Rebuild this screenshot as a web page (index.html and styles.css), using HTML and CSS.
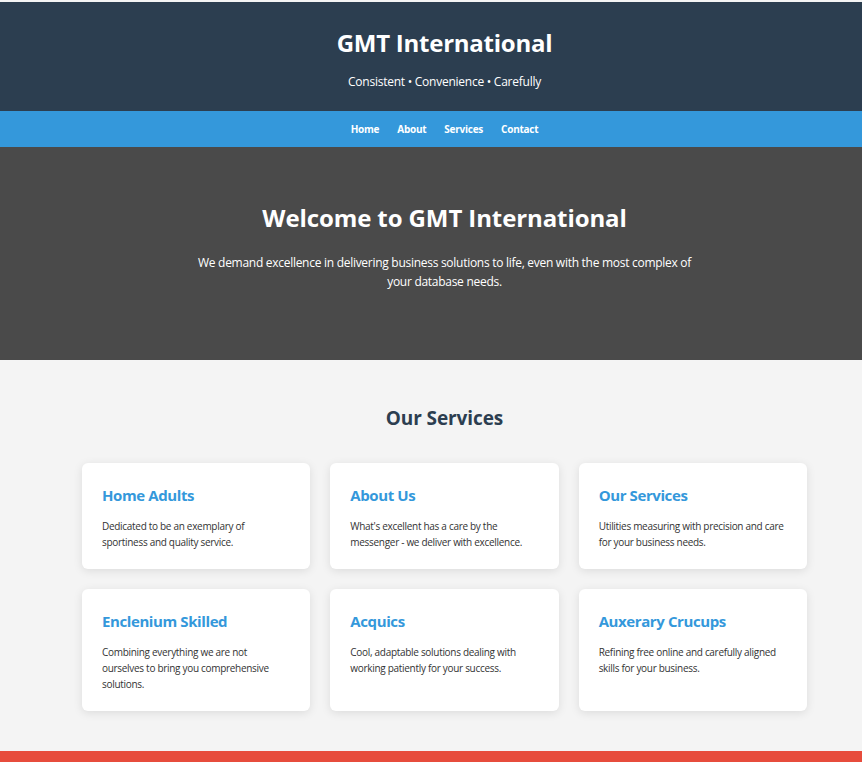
FILE: index.html
```html
<!DOCTYPE html>
<html lang="en">
<head>
<meta charset="utf-8">
<title>GMT International</title>
<link rel="stylesheet" href="styles.css">
</head>
<body>
<div class="page">
  <header class="site-header">
    <h1 class="brand">GMT International</h1>
    <p class="tagline">Consistent • Convenience • Carefully</p>
  </header>
  <nav class="main-nav">
    <a href="#">Home</a>
    <a href="#">About</a>
    <a href="#">Services</a>
    <a href="#">Contact</a>
  </nav>
  <section class="hero">
    <h2 class="hero-title">Welcome to GMT International</h2>
    <p class="hero-text">We demand excellence in delivering business solutions to life, even with the most complex of your database needs.</p>
  </section>
  <section class="services">
    <h2 class="section-title">Our Services</h2>
    <div class="grid">
      <div class="card"><h3>Home Adults</h3><p>Dedicated to be an exemplary of sportiness and quality service.</p></div>
      <div class="card"><h3>About Us</h3><p>What's excellent has a care by the messenger - we deliver with excellence.</p></div>
      <div class="card"><h3>Our Services</h3><p>Utilities measuring with precision and care for your business needs.</p></div>
      <div class="card"><h3>Enclenium Skilled</h3><p>Combining everything we are not ourselves to bring you comprehensive solutions.</p></div>
      <div class="card"><h3>Acquics</h3><p>Cool, adaptable solutions dealing with working patiently for your success.</p></div>
      <div class="card"><h3>Auxerary Crucups</h3><p>Refining free online and carefully aligned skills for your business.</p></div>
    </div>
  </section>
  <footer class="site-footer"></footer>
</div>
</body>
</html>
```
FILE: styles.css
```css
html { overflow: hidden; }
body {
  margin: 0;
  padding-top: 2px;
  background: #f4f4f4;
  font-family: "Open Sans", "Noto Sans", sans-serif;
  color: #333;
}
.page { width: 889px; }
.site-header {
  background: #2c3e50;
  color: #fff;
  text-align: center;
  padding: 26px 0 20px;
}
.brand {
  margin: 0;
  font-size: 24px;
  line-height: 30px;
  font-weight: 700;
  letter-spacing: -0.25px;
}
.tagline {
  margin: 15px 0 0;
  font-size: 12px;
  line-height: 18px;
  letter-spacing: -0.25px;
}
.main-nav {
  background: #3498db;
  height: 36px;
  display: flex;
  justify-content: center;
  align-items: center;
  gap: 18px;
}
.main-nav a {
  color: #fff;
  text-decoration: none;
  font-size: 10px;
  font-weight: 700;
  letter-spacing: -0.25px;
}
.hero {
  background: #4a4a4a;
  color: #fff;
  text-align: center;
  padding: 55px 0 69px;
}
.hero-title {
  margin: 0;
  font-size: 24px;
  line-height: 32px;
  font-weight: 700;
  letter-spacing: -0.1px;
}
.hero-text {
  margin: 19px auto 0;
  max-width: 500px;
  font-size: 12px;
  line-height: 19px;
  letter-spacing: -0.28px;
}
.services {
  padding: 45px 82px 40px;
  text-align: center;
}
.section-title {
  margin: 0 0 32px;
  font-size: 19px;
  line-height: 26px;
  color: #2c3e50;
  letter-spacing: -0.1px;
}
.grid {
  display: grid;
  grid-template-columns: repeat(3, 1fr);
  gap: 20px;
  text-align: left;
}
.card {
  background: #fff;
  border-radius: 6px;
  box-shadow: 0 2px 10px rgba(0,0,0,0.1);
  padding: 20px 20px 19px;
}
.card h3 {
  margin: 0 0 11px;
  font-size: 15px;
  line-height: 24px;
  color: #3498db;
  letter-spacing: -0.4px;
}
.card p {
  margin: 0;
  font-size: 10px;
  line-height: 16px;
  color: #333;
  letter-spacing: -0.3px;
}
.site-footer {
  background: #e74c3c;
  height: 40px;
}
```
